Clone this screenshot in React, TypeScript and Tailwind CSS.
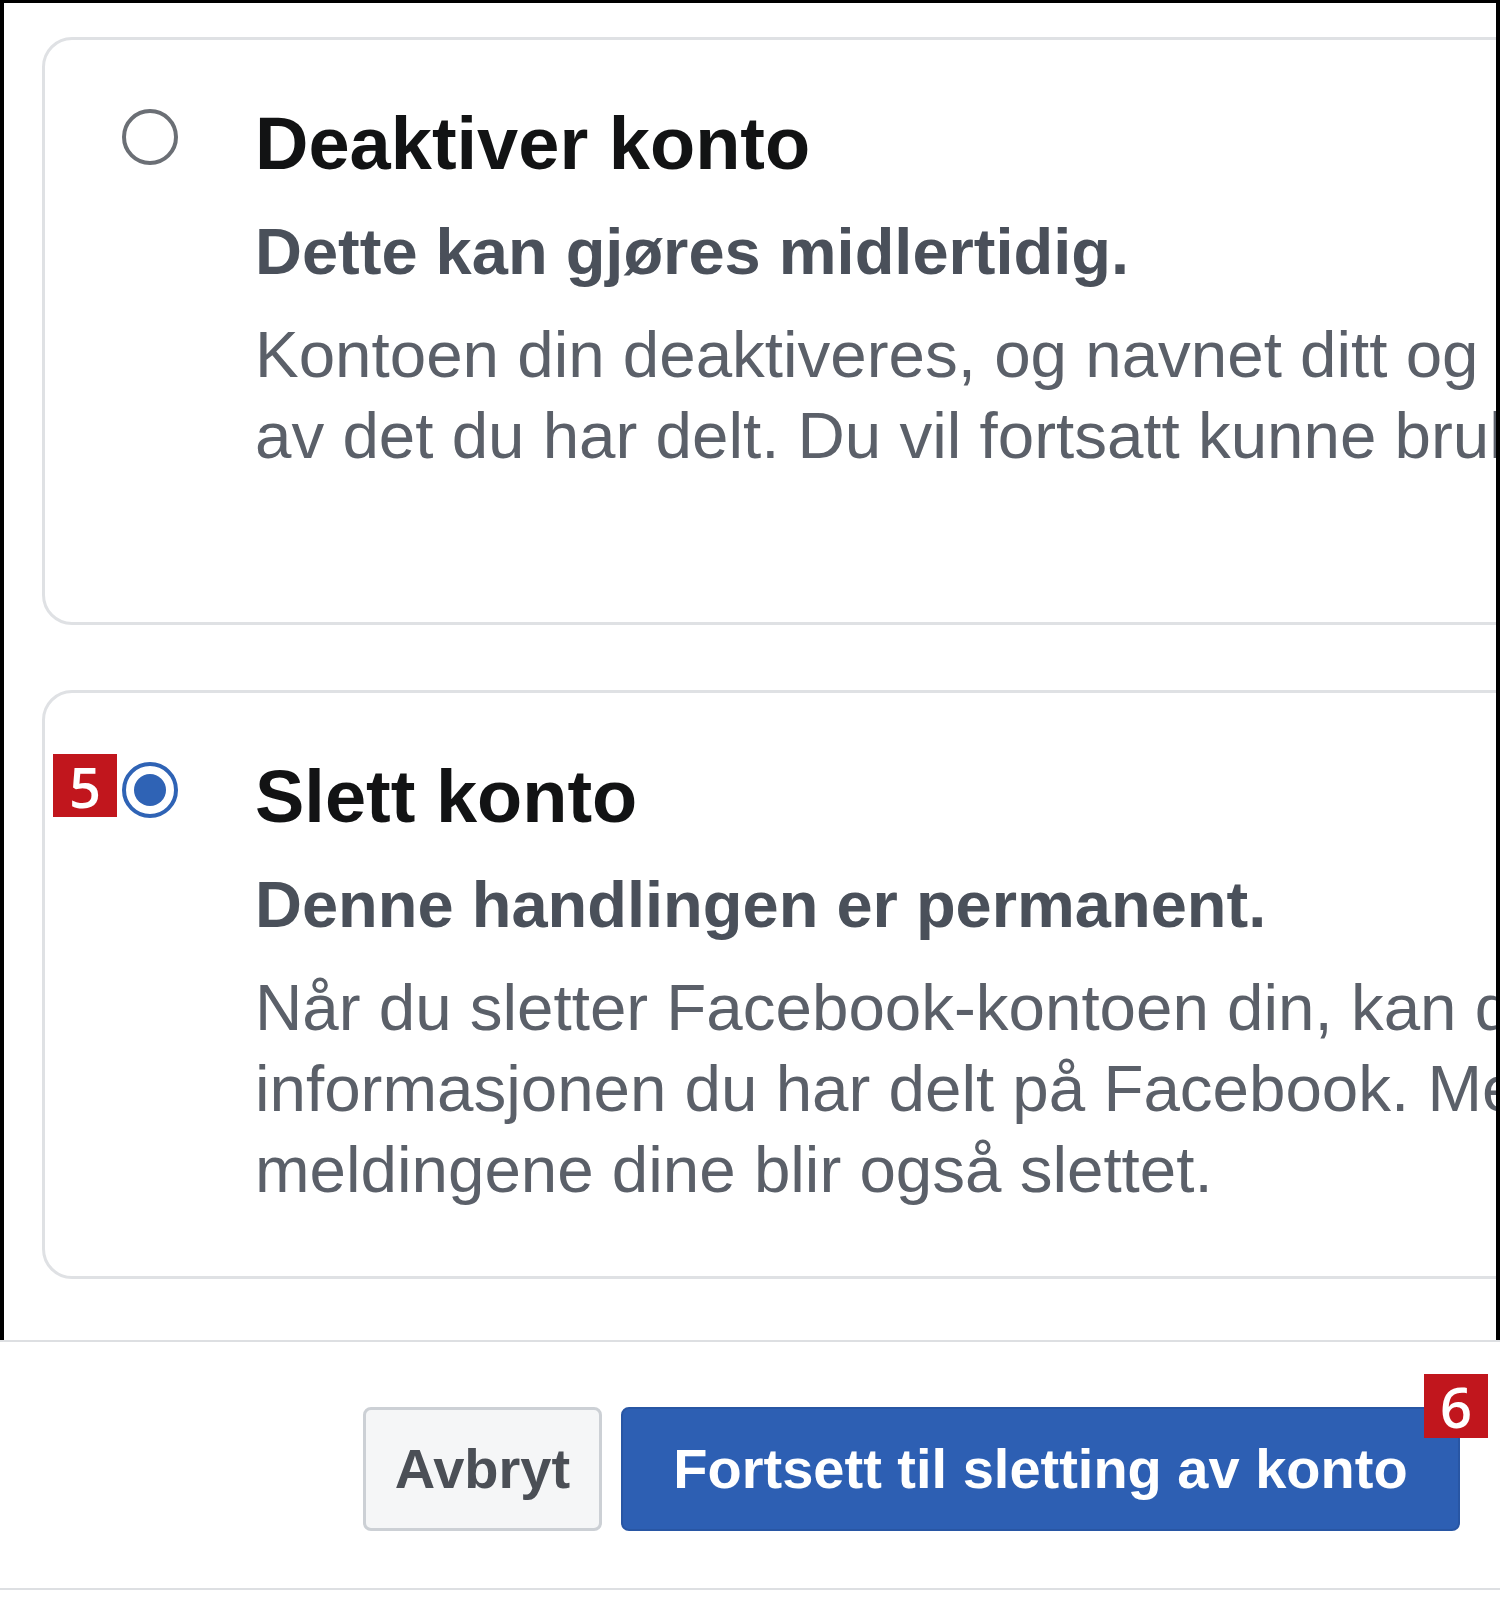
import React from 'react';

interface OptionCardProps {
  title: string;
  subtitle: string;
  lines: string[];
  selected?: boolean;
  badge?: string;
  className?: string;
}

const Badge: React.FC<{ label: string; className?: string }> = ({ label, className }) => (
  <div
    className={`absolute flex items-center justify-center bg-[#c1161d] text-white font-['Open_Sans',sans-serif] font-semibold text-[56px] leading-none ${className ?? ''}`}
  >
    {label}
  </div>
);

const Radio: React.FC<{ selected?: boolean; badge?: string }> = ({ selected, badge }) => (
  <div
    className={`relative mt-2 w-[56px] h-[56px] shrink-0 rounded-full border-[4px] flex items-center justify-center ${
      selected ? 'border-[#2f63b5]' : 'border-[#6b6f75]'
    }`}
  >
    {selected && <div className="w-[32px] h-[32px] rounded-full bg-[#2f63b5]" />}
    {badge && <Badge label={badge} className="right-[57px] top-[-12px] w-[64px] h-[63px]" />}
  </div>
);

const OptionCard: React.FC<OptionCardProps> = ({ title, subtitle, lines, selected, badge, className }) => (
  <div
    className={`w-[1700px] flex rounded-[30px] border-[3px] border-[#dfe1e4] pl-[77px] pt-[61px] ${className ?? ''}`}
  >
    <Radio selected={selected} badge={badge} />
    <div className="ml-[77px]">
      <div className="text-[74px] leading-[86px] font-bold text-[#121314]">{title}</div>
      <div className="mt-[27px] text-[65px] leading-[76px] font-bold text-[#4a505a]">{subtitle}</div>
      <div className="mt-[24px] text-[65.5px] leading-[81px] text-[#5b6069] whitespace-nowrap">
        {lines.map((line) => (
          <div key={line}>{line}</div>
        ))}
      </div>
    </div>
  </div>
);

export default function App() {
  return (
    <div className="w-[1500px] bg-white font-['Liberation_Sans',Arial,sans-serif]">
      <div className="overflow-hidden border-t-[3px] border-l-[4px] border-r-[4px] border-black pt-[34px] pl-[38px] pb-[61px]">
        <OptionCard
          title="Deaktiver konto"
          subtitle="Dette kan gjøres midlertidig."
          lines={[
            'Kontoen din deaktiveres, og navnet ditt og bildet ditt fjernes fra det meste',
            'av det du har delt. Du vil fortsatt kunne bruke Messenger.',
          ]}
          className="pb-[146px]"
        />
        <OptionCard
          title="Slett konto"
          subtitle="Denne handlingen er permanent."
          lines={[
            'Når du sletter Facebook-kontoen din, kan du ikke hente ut innholdet eller',
            'informasjonen du har delt på Facebook. Messenger og alle',
            'meldingene dine blir også slettet.',
          ]}
          selected
          badge="5"
          className="mt-[65px] pb-[66px]"
        />
      </div>

      <div className="flex justify-end gap-[19px] border-t-2 border-b-2 border-[#dddfe2] pt-[65px] pb-[57px] pr-[40px]">
        <button className="w-[239px] h-[124px] rounded-[8px] border-[3px] border-[#ccd0d5] bg-[#f5f6f7] text-[56px] font-bold text-[#4b4f56]">
          Avbryt
        </button>
        <button className="relative w-[839px] h-[124px] rounded-[8px] border-[2px] border-[#2856a4] bg-[#2d5fb3] text-[56px] font-bold text-white">
          Fortsett til sletting av konto
          <Badge label="6" className="right-[-30px] top-[-35px] w-[64px] h-[64px]" />
        </button>
      </div>
    </div>
  );
}
